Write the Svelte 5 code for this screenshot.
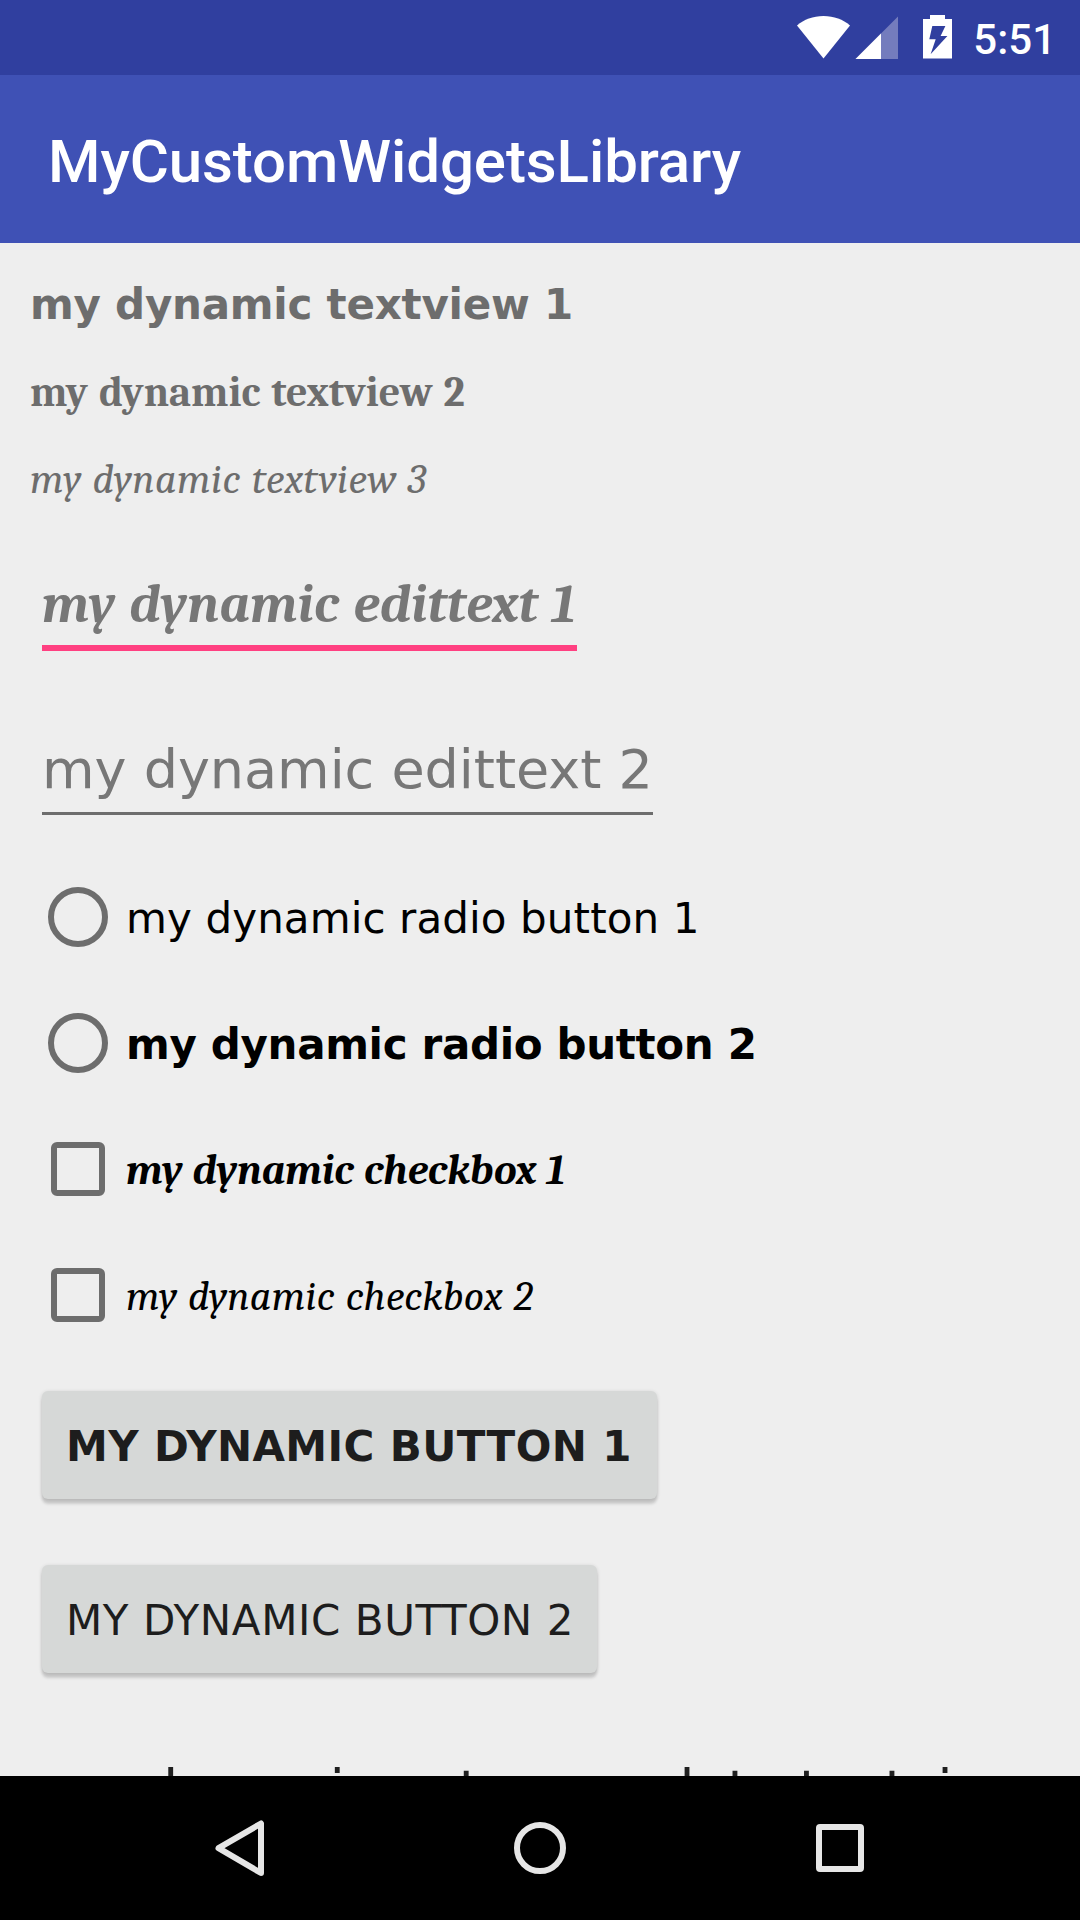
<script>
  const views = [
    { text: 'my dynamic textview 1', style: 'sans bold tight' },
    { text: 'my dynamic textview 2', style: 'serif bold wide-words' },
    { text: 'my dynamic textview 3', style: 'serif italic airy' }
  ];
  const options = [
    { kind: 'radio', text: 'my dynamic radio button 1', style: 'sans loose' },
    { kind: 'radio', text: 'my dynamic radio button 2', style: 'sans bold tighter' },
    { kind: 'check', text: 'my dynamic checkbox 1', style: 'serif bold italic words' },
    { kind: 'check', text: 'my dynamic checkbox 2', style: 'serif italic looser' }
  ];
</script>

<div class="screen">
  <header class="status">
    <svg class="status-icons" viewBox="0 0 165 75" aria-hidden="true">
      <path fill="#fff" d="M9 25.5C16 19.500 25 16 35.500 16S55 19.500 62 25.500L35.500 58.500Z" />
      <path fill="#747cbd" d="M110 16.500V59H67.500Z" />
      <path fill="#fff" d="M93 33.500V59H67.500Z" />
      <path fill="#fff" fill-rule="evenodd" d="M142 15h15v4h7v39.500h-29V19h7ZM144.300 26L141.300 39.300H147.700L142.600 54.300L159.400 36H152.600L157.400 26Z" />
    </svg>
    <span class="clock">5:51</span>
  </header>

  <div class="appbar"><h1>MyCustomWidgetsLibrary</h1></div>

  <main>
    {#each views as view}
      <div class="view {view.style}">{view.text}</div>
    {/each}

    <div class="field focused serif bold italic">my dynamic edittext 1</div>
    <div class="field plain sans">my dynamic edittext 2</div>

    <div class="options">
      {#each options as option}
        <div class="option">
          <span class="box {option.kind}"></span>
          <span class="label {option.style}">{option.text}</span>
        </div>
      {/each}
    </div>

    <button class="sans bold first">MY DYNAMIC BUTTON 1</button>
    <button class="sans second">MY DYNAMIC BUTTON 2</button>

    <div class="auto sans">my dynamic auto complete textview</div>
  </main>

  <nav>
    <svg viewBox="0 0 1080 144" aria-hidden="true">
      <g fill="none" stroke="#e6e6e6" stroke-width="6" stroke-linejoin="round">
        <path d="M261 47.500V97L218.500 72.200Z" />
        <circle cx="540" cy="72" r="23" />
        <rect x="819" y="51" width="42" height="42" rx="1" />
      </g>
    </svg>
  </nav>
</div>

<style>
  :global(body) { margin: 0; }
  .screen {
    width: 1080px;
    height: 1920px;
    display: flex;
    flex-direction: column;
    background: #eeeeee;
    overflow: hidden;
  }
  .status {
    height: 75px;
    flex: none;
    display: flex;
    justify-content: flex-end;
    padding-right: 24px;
    background: #303f9f;
    color: #fff;
  }
  .status-icons { width: 165px; height: 75px; margin-right: 20.300px; }
  .clock { font: 500 42px/79px Roboto, sans-serif; }
  .appbar {
    height: 168px;
    flex: none;
    padding-left: 48px;
    background: #3f51b5;
    color: #fff;
  }
  h1 {
    margin: 0;
    font: 500 60px/174px Roboto, sans-serif;
    letter-spacing: -0.08px;
  }
  main {
    height: 1515px;
    flex: none;
    padding-top: 18px;
    display: flex;
    flex-direction: column;
    align-items: flex-start;
    overflow: hidden;
    white-space: nowrap;
  }
  .sans { font-family: Verdana, "DejaVu Sans", sans-serif; }
  .serif { font-family: Cambria, Caladea, "Noto Serif", "DejaVu Serif Condensed", serif; }
  .bold { font-weight: 700; }
  .italic { font-style: italic; }
  .tight { letter-spacing: -0.23px; }
  .tighter { letter-spacing: -0.33px; }
  .loose { letter-spacing: 0.1px; }
  .looser { letter-spacing: 0.22px; word-spacing: 1px; }
  .airy { letter-spacing: 0.4px; word-spacing: 1px; }
  .words { word-spacing: 0.8px; }
  .wide-words { word-spacing: 1.7px; }
  .view {
    height: 87px;
    flex: none;
    padding-left: 30px;
    font-size: 42px;
    line-height: 87px;
    color: #6d6d6d;
  }
  .view.serif { line-height: 89px; }
  .field {
    box-sizing: border-box;
    flex: none;
    margin-left: 42px;
    font-size: 54px;
    line-height: 66px;
    color: #777777;
  }
  .focused {
    width: 535px;
    height: 80px;
    margin-top: 49px;
    border-bottom: 6px solid #ff4081;
    line-height: 68px;
    letter-spacing: 0.45px;
    word-spacing: 1.3px;
  }
  .plain {
    width: 611px;
    height: 78px;
    margin-top: 86px;
    border-bottom: 3px solid #6d6d6d;
    letter-spacing: -0.03px;
  }
  .options { margin-top: 39px; }
  .option {
    height: 126px;
    display: flex;
    align-items: center;
    padding-left: 48px;
  }
  .box { box-sizing: border-box; border: 6px solid #6d6d6d; }
  .radio { width: 60px; height: 60px; border-radius: 50%; }
  .check { width: 54px; height: 54px; margin: 0 3px; border-radius: 6px; }
  .label {
    margin-left: 18px;
    padding-top: 4px;
    font-size: 42px;
    line-height: 60px;
    color: #000;
  }
  button {
    height: 108px;
    flex: none;
    margin: 33px 0 0 42px;
    padding: 2px 0 0 24px;
    border: 0;
    border-radius: 6px;
    background: #d6d8d7;
    box-shadow: 0 5px 3px rgba(0, 0, 0, 0.14), 0 1px 4px rgba(0, 0, 0, 0.14);
    font-size: 42px;
    text-align: left;
    color: #1d1d1d;
  }
  .first { width: 615px; letter-spacing: 0.38px; }
  .second { width: 555px; margin-top: 66px; letter-spacing: 0.58px; }
  .auto {
    margin: 84px 0 0 42px;
    font-size: 54px;
    line-height: 66px;
    letter-spacing: -0.03px;
    color: #1f1f1f;
  }
  nav { height: 144px; flex: none; background: #000; }
  nav svg { display: block; width: 1080px; height: 144px; }
</style>
